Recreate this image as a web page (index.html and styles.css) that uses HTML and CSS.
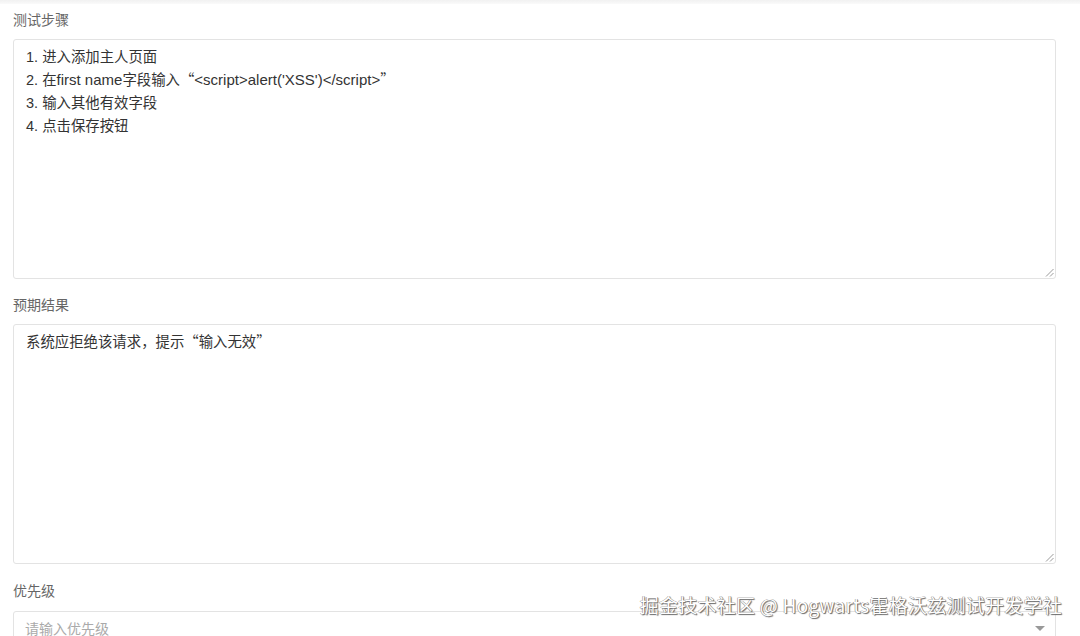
FILE: index.html
```html
<!DOCTYPE html>
<html lang="zh-CN">
<head>
<meta charset="utf-8">
<title>测试用例</title>
<link rel="stylesheet" href="styles.css">
</head>
<body>
<div class="topbar"></div>
<form class="form">
  <div class="field">
    <label class="label">测试步骤</label>
    <div class="area" role="textbox" aria-multiline="true">
      <div class="line"><span class="num">1. </span>进入添加主人页面</div>
      <div class="line"><span class="num">2. </span>在<span class="en">first name</span>字段输入“<span class="en">&lt;script&gt;alert('XSS')&lt;/script&gt;</span>”</div>
      <div class="line"><span class="num">3. </span>输入其他有效字段</div>
      <div class="line"><span class="num">4. </span>点击保存按钮</div>
      <svg class="grip" width="9" height="9" viewBox="0 0 9 9"><path d="M1 8.5 L8.5 1 M5 8.5 L8.5 5" stroke="#9a9a9a" stroke-width="1" fill="none"/></svg>
    </div>
  </div>
  <div class="field">
    <label class="label">预期结果</label>
    <div class="area" role="textbox" aria-multiline="true">
      <div class="line">系统应拒绝该请求，提示“输入无效”</div>
      <svg class="grip" width="9" height="9" viewBox="0 0 9 9"><path d="M1 8.5 L8.5 1 M5 8.5 L8.5 5" stroke="#9a9a9a" stroke-width="1" fill="none"/></svg>
    </div>
  </div>
  <div class="field field-last">
    <label class="label">优先级</label>
    <div class="select">
      <span class="placeholder">请输入优先级</span>
      <span class="caret"></span>
    </div>
  </div>
</form>
<div class="watermark">掘金技术社区 @ Hogwarts霍格沃兹测试开发学社</div>
</body>
</html>
```
FILE: styles.css
```css
html, body {
  margin: 0;
  padding: 0;
  background: #fff;
  overflow: hidden;
  height: 636px;
}
body {
  position: relative;
  font-family: "Liberation Sans", "Noto Sans CJK SC", sans-serif;
  font-size: 14px;
  color: #333;
}
.topbar {
  height: 4px;
  background: linear-gradient(#f1f1f1, #fafafa);
}
.form {
  display: flex;
  flex-direction: column;
  gap: 15px;
  padding: 5px 24px 0 13px;
}
.field {
  display: flex;
  flex-direction: column;
  gap: 10px;
}
.field-last {
  gap: 11px;
  margin-top: 1px;
}
.label {
  display: block;
  height: 20px;
  line-height: 20px;
  color: #666;
  font-family: "Noto Sans CJK SC", sans-serif;
  font-size: 14px;
}
.area {
  position: relative;
  box-sizing: border-box;
  width: 1043px;
  height: 240px;
  margin: 0;
  padding: 4px 12px;
  border: 1px solid #e3e3e3;
  border-radius: 3px;
  font-family: "Noto Sans CJK SC", "Liberation Sans", sans-serif;
  font-size: 14.4px;
  line-height: 23px;
  color: #333;
  background: #fff;
}
.line {
  height: 23px;
  white-space: pre;
}
.en {
  font-family: "Liberation Sans", "Noto Sans CJK SC", sans-serif;
  font-size: 15px;
}
.num {
  font-family: "Liberation Sans", sans-serif;
  font-size: 14.5px;
}
.grip {
  position: absolute;
  right: 1px;
  bottom: 1px;
}
.select {
  box-sizing: border-box;
  width: 1043px;
  height: 34px;
  display: flex;
  align-items: center;
  justify-content: space-between;
  padding: 0 10px 0 11px;
  border: 1px solid #e3e3e3;
  border-radius: 3px;
  background: #fff;
}
.placeholder {
  color: #aaa;
  font-family: "Noto Sans CJK SC", sans-serif;
  font-size: 14px;
  line-height: 20px;
}
.caret {
  width: 0;
  height: 0;
  border-left: 5px solid transparent;
  border-right: 5px solid transparent;
  border-top: 5px solid #999;
}
.watermark {
  position: absolute;
  right: 18px;
  top: 592px;
  font-family: "Noto Sans CJK SC", "Liberation Sans", sans-serif;
  font-size: 19px;
  line-height: 26px;
  color: #fff;
  letter-spacing: 0.25px;
  text-shadow: 1px 1px 1px #666, -0.5px -0.5px 0 #888, 0.5px 0 0 #888;
  white-space: nowrap;
}
```
